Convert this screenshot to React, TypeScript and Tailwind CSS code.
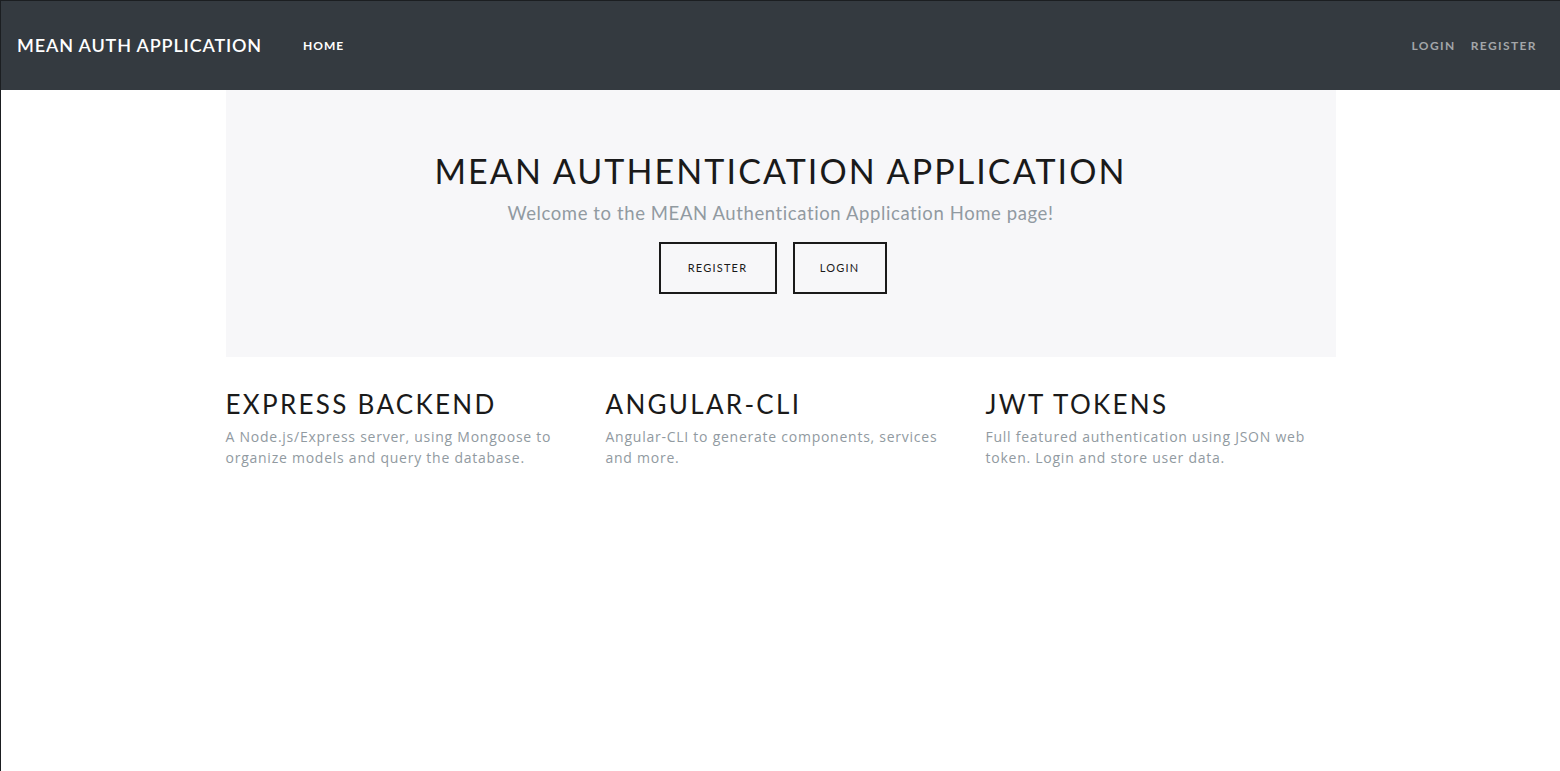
import React from "react";

const font = { fontFamily: '"Lato", "Open Sans", "Noto Sans", sans-serif' };
const bodyFont = { fontFamily: '"Open Sans", "Lato", "Noto Sans", sans-serif' };

const features = [
  {
    title: "Express Backend",
    text: "A Node.js/Express server, using Mongoose to organize models and query the database.",
  },
  {
    title: "Angular-CLI",
    text: "Angular-CLI to generate components, services and more.",
  },
  {
    title: "JWT Tokens",
    text: "Full featured authentication using JSON web token. Login and store user data.",
  },
];

export default function App() {
  return (
    <div
      className="min-h-[771px] bg-white border-l border-t border-[#1b1e21]"
      style={font}
    >
      <nav className="h-[89px] bg-[#343a40] flex items-center pl-[16px] pr-[23px]">
        <a className="text-white text-[18px] font-semibold tracking-[0.85px] uppercase">
          MEAN Auth Application
        </a>
        <a className="ml-[41px] text-white text-[12px] font-bold tracking-[1px] uppercase">
          Home
        </a>
        <div className="ml-auto flex gap-[15px]">
          <a className="text-[#a3a6a9] text-[12px] font-bold tracking-[1.4px] uppercase">
            Login
          </a>
          <a className="text-[#a3a6a9] text-[12px] font-bold tracking-[1.4px] uppercase">
            Register
          </a>
        </div>
      </nav>
      <main className="w-[1110px] mx-auto">
        <section className="bg-[#f7f7f9] h-[267px] flex flex-col items-center pt-[61px]">
          <h1 className="text-[#1a1a1a] text-[34px] leading-[40px] font-normal tracking-[2.1px] uppercase">
            MEAN Authentication Application
          </h1>
          <p className="text-[#919aa1] text-[18.5px] leading-[26px] mt-[9px] tracking-[0.6px]">
            Welcome to the MEAN Authentication Application Home page!
          </p>
          <div className="flex gap-[16px] mt-[16px] pr-[16px]">
            <a className="h-[52px] w-[118px] border-2 border-[#1a1a1a] flex items-center justify-center text-[11px] font-normal tracking-[1.2px] text-[#1a1a1a] uppercase">
              Register
            </a>
            <a className="h-[52px] w-[94px] border-2 border-[#1a1a1a] flex items-center justify-center text-[11px] font-normal tracking-[1.2px] text-[#1a1a1a] uppercase">
              Login
            </a>
          </div>
        </section>
        <div className="grid grid-cols-3 gap-[30px] mt-[30px]">
          {features.map((f) => (
            <div key={f.title}>
              <h3 className="text-[#1a1a1a] text-[26px] leading-[34px] font-normal tracking-[2.3px] uppercase">
                {f.title}
              </h3>
              <p
                className="text-[#919aa1] text-[14px] leading-[21px] mt-[5px] tracking-[0.75px]"
                style={bodyFont}
              >
                {f.text}
              </p>
            </div>
          ))}
        </div>
      </main>
    </div>
  );
}
